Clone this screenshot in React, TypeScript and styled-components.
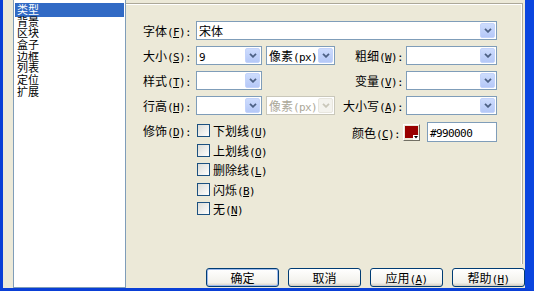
import React from "react";
import styled, { createGlobalStyle } from "styled-components";

const GlobalStyle = createGlobalStyle`
  html, body {
    margin: 0;
    padding: 0;
    background: #ffffff;
  }
  body {
    font-family: "Noto Sans CJK SC", "Noto Sans", sans-serif;
    font-size: 12px;
    color: #000000;
  }
`;

const Window = styled.div`
  box-sizing: border-box;
  width: 534px;
  height: 291px;
  display: flex;
  background: #ece9d8;
  border-left: 3px solid #0a3fd6;
  border-right: 9px solid #0a45df;
  border-bottom: 3px solid #0a3fd6;
`;

const CategoryList = styled.ul`
  box-sizing: border-box;
  flex: none;
  width: 113px;
  margin: 0 0 0 10px;
  padding: 4px 1px 0;
  list-style: none;
  background: #ffffff;
  border: 1px solid #7f9db9;
  border-top: none;
`;

const CategoryItem = styled.li<{ $selected?: boolean }>`
  height: 11.7px;
  font-size: 11px;
  line-height: 11.7px;
  padding-left: 2px;
  background: ${(p) => (p.$selected ? "#316ac5" : "transparent")};
  box-shadow: ${(p) => (p.$selected ? "0 -1px #316ac5, 0 1px #316ac5" : "none")};
  color: ${(p) => (p.$selected ? "#ffffff" : "#000000")};
`;

const Side = styled.div`
  flex: 1;
  display: flex;
  flex-direction: column;
`;

const Panel = styled.div`
  flex: 1;
  margin: 3px 2px 0 0;
  padding: 17px 0 0 17px;
  border-top: 1px solid #aca899;
  border-right: 1px solid #aca899;
  box-shadow: inset 0 1px #ffffff, inset -1px 0 #ffffff;
`;

const Form = styled.div`
  display: grid;
  width: 355px;
  grid-template-columns: 53px 70px 69px 71px 91px;
  grid-template-rows: 19px 19px 19px 19px auto;
  row-gap: 6px;
  align-items: center;
`;

const Label = styled.div<{ $right?: boolean; $col?: string }>`
  white-space: nowrap;
  grid-column: ${(p) => p.$col ?? "auto"};
  text-align: ${(p) => (p.$right ? "right" : "left")};
  padding-right: ${(p) => (p.$right ? "3px" : "0")};
`;

const Latin = styled.span`
  font-family: "DejaVu Sans Mono", "Liberation Mono", monospace;
  font-size: 11px;
  letter-spacing: -0.6px;
`;

const Key = styled.span`
  text-decoration: underline;
`;

const SelectBox = styled.div<{ $width: number; $disabled?: boolean; $col?: string }>`
  box-sizing: border-box;
  grid-column: ${(p) => p.$col ?? "auto"};
  width: ${(p) => p.$width}px;
  height: 19px;
  display: flex;
  background: #ffffff;
  border: 1px solid ${(p) => (p.$disabled ? "#c9c7ba" : "#7f9db9")};
  color: ${(p) => (p.$disabled ? "#aca899" : "#000000")};
`;

const SelectValue = styled.div`
  flex: 1;
  padding-left: 2px;
  line-height: 17px;
  white-space: nowrap;
  overflow: hidden;
`;

const DropButton = styled.div<{ $disabled?: boolean }>`
  box-sizing: border-box;
  flex: none;
  width: 15px;
  margin: 1px;
  display: flex;
  align-items: center;
  justify-content: center;
  border-radius: 2px;
  border: 1px solid ${(p) => (p.$disabled ? "#e8e6de" : "#c3d3fb")};
  background: ${(p) =>
    p.$disabled ? "#f4f3ee" : "linear-gradient(#cddcfd, #b5c8f7)"};
`;

const Select = ({
  width,
  value,
  disabled,
  col,
}: {
  width: number;
  value?: React.ReactNode;
  disabled?: boolean;
  col?: string;
}) => (
  <SelectBox $width={width} $disabled={disabled} $col={col}>
    <SelectValue>{value}</SelectValue>
    <DropButton $disabled={disabled}>
      <svg width="8" height="5" viewBox="0 0 8 5">
        <path
          d="M1 0.8 L4 3.8 L7 0.8"
          fill="none"
          stroke={disabled ? "#c9c7ba" : "#4d6185"}
          strokeWidth="1.8"
        />
      </svg>
    </DropButton>
  </SelectBox>
);

const DecoLabel = styled(Label)`
  align-self: start;
  line-height: 19px;
`;

const CheckList = styled.div`
  grid-column: 2 / 4;
  align-self: start;
  display: flex;
  flex-direction: column;
`;

const CheckItem = styled.label`
  height: 19.5px;
  display: flex;
  align-items: center;
  gap: 3px;
  white-space: nowrap;
`;

const CheckBox = styled.span`
  box-sizing: border-box;
  width: 13px;
  height: 13px;
  margin-left: 1px;
  border: 1px solid #1c5180;
  background: linear-gradient(135deg, #dcdcd7, #ffffff);
`;

const ColorGroup = styled.div`
  grid-column: 4 / 6;
  align-self: start;
  justify-self: end;
  margin-top: 1px;
  display: flex;
  align-items: center;
`;

const Swatch = styled.div`
  position: relative;
  box-sizing: border-box;
  width: 17px;
  height: 17px;
  margin: 0 7px 0 3px;
  padding: 1px;
  background: #ece9d8;
  border: 1px solid;
  border-color: #ffffff #716f64 #716f64 #ffffff;
`;

const SwatchFill = styled.div`
  width: 13px;
  height: 12px;
  background: #990000;
`;

const SwatchArrow = styled.svg`
  position: absolute;
  right: 0;
  bottom: 0;
`;

const HexField = styled.div`
  box-sizing: border-box;
  width: 70px;
  height: 20px;
  padding-left: 2px;
  line-height: 18px;
  background: #ffffff;
  border: 1px solid #7f9db9;
`;

const ButtonBar = styled.div`
  display: flex;
  justify-content: flex-end;
  gap: 9px;
  padding: 4px 0 1px;
`;

const DialogButton = styled.button<{ $default?: boolean }>`
  box-sizing: border-box;
  width: 73px;
  height: 19px;
  padding: 0;
  font-family: "Noto Sans CJK SC", "Noto Sans", sans-serif;
  font-size: 12px;
  line-height: 17px;
  color: #000000;
  border: 1px solid #003c74;
  border-radius: 3px;
  background: linear-gradient(#ffffff, #f2f1eb 80%, #d6d0c5);
  box-shadow: ${(p) =>
    p.$default ? "inset 0 0 0 1px #9db9eb" : "inset 0 -1px #d6d0c5"};
`;

const categories = ["类型", "背景", "区块", "盒子", "边框", "列表", "定位", "扩展"];

const Mnemonic = ({ k }: { k: string }) => (
  <Latin>
    (<Key>{k}</Key>):
  </Latin>
);

const decorations: [string, string][] = [
  ["下划线", "U"],
  ["上划线", "O"],
  ["删除线", "L"],
  ["闪烁", "B"],
  ["无", "N"],
];

const unit = (
  <>
    像素<Latin>(px)</Latin>
  </>
);

export default function App() {
  return (
    <>
      <GlobalStyle />
      <Window>
        <CategoryList>
          {categories.map((c, i) => (
            <CategoryItem key={c} $selected={i === 0}>
              {c}
            </CategoryItem>
          ))}
        </CategoryList>
        <Side>
          <Panel>
            <Form>
              <Label>
                字体<Mnemonic k="F" />
              </Label>
              <Select width={301} col="2 / 6" value="宋体" />

              <Label>
                大小<Mnemonic k="S" />
              </Label>
              <Select width={66} value={<Latin>9</Latin>} />
              <Select width={69} value={unit} />
              <Label $right>
                粗细<Mnemonic k="W" />
              </Label>
              <Select width={91} />

              <Label>
                样式<Mnemonic k="T" />
              </Label>
              <Select width={66} />
              <Label $right $col="4">
                变量<Mnemonic k="V" />
              </Label>
              <Select width={91} />

              <Label>
                行高<Mnemonic k="H" />
              </Label>
              <Select width={66} />
              <Select width={69} value={unit} disabled />
              <Label $right>
                大小写<Mnemonic k="A" />
              </Label>
              <Select width={91} />

              <DecoLabel>
                修饰<Mnemonic k="D" />
              </DecoLabel>
              <CheckList>
                {decorations.map(([t, k]) => (
                  <CheckItem key={k}>
                    <CheckBox />
                    <span>
                      {t}
                      <Latin>
                        (<Key>{k}</Key>)
                      </Latin>
                    </span>
                  </CheckItem>
                ))}
              </CheckList>
              <ColorGroup>
                <span>
                  颜色<Mnemonic k="C" />
                </span>
                <Swatch>
                  <SwatchFill />
                  <SwatchArrow width="6" height="5" viewBox="0 0 6 5">
                    <rect width="6" height="5" fill="#ffffff" />
                    <path d="M1 1 H5 L3 3.5 Z" fill="#000000" />
                  </SwatchArrow>
                </Swatch>
                <HexField>
                  <Latin>#990000</Latin>
                </HexField>
              </ColorGroup>
            </Form>
          </Panel>
          <ButtonBar>
            <DialogButton $default>确定</DialogButton>
            <DialogButton>取消</DialogButton>
            <DialogButton>
              应用
              <Latin>
                (<Key>A</Key>)
              </Latin>
            </DialogButton>
            <DialogButton>
              帮助
              <Latin>
                (<Key>H</Key>)
              </Latin>
            </DialogButton>
          </ButtonBar>
        </Side>
      </Window>
    </>
  );
}
